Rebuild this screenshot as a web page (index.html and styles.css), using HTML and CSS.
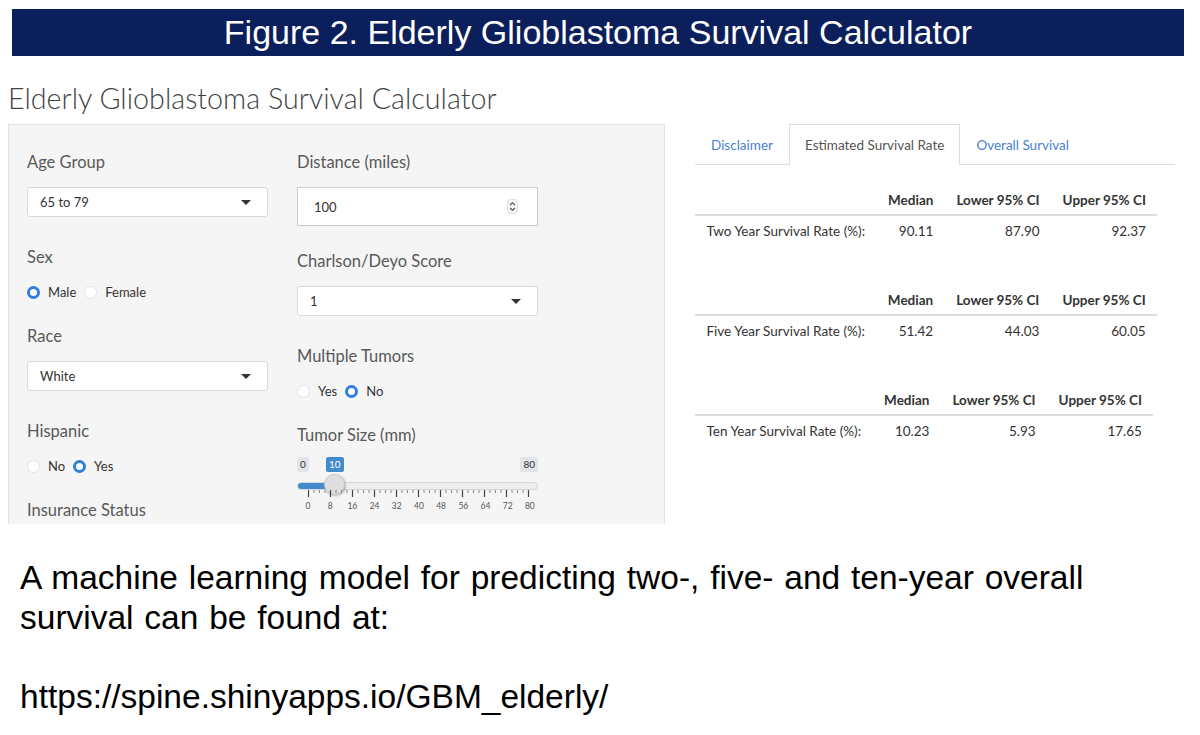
FILE: index.html
```html
<!DOCTYPE html>
<html>
<head>
<meta charset="utf-8">
<link rel="stylesheet" href="styles.css">
</head>
<body>
<div class="banner"><span class="banner-text">Figure 2. Elderly Glioblastoma Survival Calculator</span></div>

<div class="app">
  <h1 class="app-title">Elderly Glioblastoma Survival Calculator</h1>
  <div class="app-row">
    <div class="well">
      <div class="col">
        <div class="group g-select">
          <div class="lbl">Age Group</div>
          <div class="select"><span>65 to 79</span><span class="caret"></span></div>
        </div>
        <div class="group g-radio">
          <div class="lbl">Sex</div>
          <div class="radios">
            <span class="radio on"></span><span class="rtext">Male</span>
            <span class="radio"></span><span class="rtext">Female</span>
          </div>
        </div>
        <div class="group g-select">
          <div class="lbl">Race</div>
          <div class="select"><span>White</span><span class="caret"></span></div>
        </div>
        <div class="group g-radio">
          <div class="lbl">Hispanic</div>
          <div class="radios">
            <span class="radio"></span><span class="rtext">No</span>
            <span class="radio on"></span><span class="rtext">Yes</span>
          </div>
        </div>
        <div class="group">
          <div class="lbl">Insurance Status</div>
        </div>
      </div>
      <div class="col">
        <div class="group g-num">
          <div class="lbl">Distance (miles)</div>
          <div class="numinput"><span>100</span>
            <svg class="spin" width="11" height="15" viewBox="0 0 11 15"><rect x="0.5" y="0.5" width="10" height="14" rx="3" fill="#f6f6f6" stroke="#ddd"/><path d="M3.2 6 L5.5 3.7 L7.8 6 M3.2 9 L5.5 11.3 L7.8 9" fill="none" stroke="#444" stroke-width="1.1"/></svg>
          </div>
        </div>
        <div class="group g-select">
          <div class="lbl">Charlson/Deyo Score</div>
          <div class="select"><span>1</span><span class="caret"></span></div>
        </div>
        <div class="group g-radio">
          <div class="lbl">Multiple Tumors</div>
          <div class="radios">
            <span class="radio"></span><span class="rtext">Yes</span>
            <span class="radio on"></span><span class="rtext">No</span>
          </div>
        </div>
        <div class="group">
          <div class="lbl">Tumor Size (mm)</div>
          <div class="slider">
            <span class="s-min">0</span>
            <span class="s-val">10</span>
            <span class="s-max">80</span>
            <div class="s-track"><div class="s-fill"></div></div>
            <div class="s-handle"></div>
            <svg class="s-grid" width="241" height="12" viewBox="0 0 241 12">
              <g stroke="#444" stroke-width="1.2">
                <line x1="11.5" y1="0" x2="11.5" y2="7"/><line x1="33.5" y1="0" x2="33.5" y2="7"/><line x1="55.5" y1="0" x2="55.5" y2="7"/><line x1="77.5" y1="0" x2="77.5" y2="7"/><line x1="99.5" y1="0" x2="99.5" y2="7"/><line x1="121.5" y1="0" x2="121.5" y2="7"/><line x1="143.5" y1="0" x2="143.5" y2="7"/><line x1="165.5" y1="0" x2="165.5" y2="7"/><line x1="187.5" y1="0" x2="187.5" y2="7"/><line x1="209.5" y1="0" x2="209.5" y2="7"/><line x1="231.5" y1="0" x2="231.5" y2="7"/>
              </g>
              <g stroke="#888" stroke-width="1">
                <line x1="17" y1="0" x2="17" y2="3"/><line x1="22.5" y1="0" x2="22.5" y2="3"/><line x1="28" y1="0" x2="28" y2="3"/>
                <line x1="39" y1="0" x2="39" y2="3"/><line x1="44.5" y1="0" x2="44.5" y2="3"/><line x1="50" y1="0" x2="50" y2="3"/>
                <line x1="61" y1="0" x2="61" y2="3"/><line x1="66.5" y1="0" x2="66.5" y2="3"/><line x1="72" y1="0" x2="72" y2="3"/>
                <line x1="83" y1="0" x2="83" y2="3"/><line x1="88.5" y1="0" x2="88.5" y2="3"/><line x1="94" y1="0" x2="94" y2="3"/>
                <line x1="105" y1="0" x2="105" y2="3"/><line x1="110.5" y1="0" x2="110.5" y2="3"/><line x1="116" y1="0" x2="116" y2="3"/>
                <line x1="127" y1="0" x2="127" y2="3"/><line x1="132.5" y1="0" x2="132.5" y2="3"/><line x1="138" y1="0" x2="138" y2="3"/>
                <line x1="149" y1="0" x2="149" y2="3"/><line x1="154.5" y1="0" x2="154.5" y2="3"/><line x1="160" y1="0" x2="160" y2="3"/>
                <line x1="171" y1="0" x2="171" y2="3"/><line x1="176.5" y1="0" x2="176.5" y2="3"/><line x1="182" y1="0" x2="182" y2="3"/>
                <line x1="193" y1="0" x2="193" y2="3"/><line x1="198.5" y1="0" x2="198.5" y2="3"/><line x1="204" y1="0" x2="204" y2="3"/>
                <line x1="215" y1="0" x2="215" y2="3"/><line x1="220.5" y1="0" x2="220.5" y2="3"/><line x1="226" y1="0" x2="226" y2="3"/>
              </g>
            </svg>
            <div class="s-nums"><span>0</span><span>8</span><span>16</span><span>24</span><span>32</span><span>40</span><span>48</span><span>56</span><span>64</span><span>72</span><span>80</span></div>
          </div>
        </div>
      </div>
    </div>

    <div class="main">
      <div class="tabs">
        <span class="tab">Disclaimer</span>
        <span class="tab active">Estimated Survival Rate</span>
        <span class="tab">Overall Survival</span>
      </div>
      <table class="rt">
        <thead><tr><th></th><th>Median</th><th>Lower 95% CI</th><th>Upper 95% CI</th></tr></thead>
        <tbody><tr><td>Two Year Survival Rate (%):</td><td>90.11</td><td>87.90</td><td>92.37</td></tr></tbody>
      </table>
      <table class="rt">
        <thead><tr><th></th><th>Median</th><th>Lower 95% CI</th><th>Upper 95% CI</th></tr></thead>
        <tbody><tr><td>Five Year Survival Rate (%):</td><td>51.42</td><td>44.03</td><td>60.05</td></tr></tbody>
      </table>
      <table class="rt">
        <thead><tr><th></th><th>Median</th><th>Lower 95% CI</th><th>Upper 95% CI</th></tr></thead>
        <tbody><tr><td>Ten Year Survival Rate (%):</td><td>10.23</td><td>5.93</td><td>17.65</td></tr></tbody>
      </table>
    </div>
  </div>
</div>

<div class="caption">
  <p>A machine learning model for predicting two-, five- and ten-year overall survival can be found at:</p>
  <p>https://spine.shinyapps.io/GBM_elderly/</p>
</div>
</body>
</html>
```

FILE: styles.css
```css
html, body { margin: 0; padding: 0; background: #fff; }
body { font-family: Lato, "Noto Sans", sans-serif; color: #333; }

.banner {
  margin: 9px 16px 0 12px;
  height: 47px;
  background: #0b1f5c;
  display: flex;
  align-items: center;
  justify-content: center;
  overflow: hidden;
}
.banner-text {
  font-family: "Liberation Sans", Arial, sans-serif;
  font-size: 34px;
  color: #fff;
  white-space: nowrap;
}

.app { padding: 0 8px; }
.app-title {
  margin: 0;
  padding-top: 26px;
  height: 42px;
  line-height: 32px;
  font-size: 28.7px;
  font-weight: 300;
  color: #444;
}
.app-row { display: flex; gap: 30px; }

.well {
  width: 657px;
  height: 400px;
  box-sizing: border-box;
  background: #f5f5f5;
  border: 1px solid #e3e3e3;
  border-bottom: none;
  padding: 27px 18px 0;
  display: grid;
  grid-template-columns: 241px 241px;
  column-gap: 29px;
  overflow: hidden;
}
.lbl {
  font-size: 16.5px;
  line-height: 20px;
  color: #595959;
  font-weight: 400;
}
.g-select { margin-bottom: 30px; }
.g-radio { margin-bottom: 22px; }
.g-num { margin-bottom: 25px; }
.g-select .lbl, .g-num .lbl { margin-bottom: 15px; }
.g-radio .lbl { margin-bottom: 13px; }

.select {
  height: 30px;
  box-sizing: border-box;
  background: #fff;
  border: 1px solid #d9d9d9;
  border-radius: 3px;
  display: flex;
  align-items: center;
  justify-content: space-between;
  padding: 0 16px 0 12px;
  font-size: 13px;
  color: #333;
}
.caret {
  width: 0; height: 0;
  border-left: 5px solid transparent;
  border-right: 5px solid transparent;
  border-top: 5px solid #333;
}
.numinput {
  height: 39px;
  box-sizing: border-box;
  background: #fff;
  border: 1px solid #ccc;
  display: flex;
  align-items: center;
  justify-content: space-between;
  padding: 0 19px 0 16px;
  font-size: 13px;
}
.radios {
  height: 24px;
  display: flex;
  align-items: center;
  font-size: 13px;
  color: #333;
}
.radio {
  width: 11px; height: 11px;
  border-radius: 50%;
  border: 1px solid #e2e2e2;
  background: #fff;
  margin-right: 8px;
}
.radio.on {
  width: 7px; height: 7px;
  border: 3px solid #2f7de1;
}
.rtext { margin-right: 8px; }

.slider {
  position: relative;
  height: 70px;
  margin-top: 12px;
}
.s-min, .s-max, .s-val {
  position: absolute;
  top: 0;
  font-size: 10px;
  line-height: 15px;
  padding: 0 3px;
  border-radius: 2px;
  background: #e1e4e9;
  color: #333;
}
.s-min { left: 0; }
.s-max { right: 0; }
.s-val { left: 29px; background: #428bca; color: #fff; }
.s-track {
  position: absolute;
  left: 0; right: 0; top: 25px;
  height: 6px;
  background: #eee;
  border: 1px solid #d5d5d5;
  border-radius: 4px;
  overflow: hidden;
}
.s-fill { width: 38px; height: 100%; background: #428bca; }
.s-handle {
  position: absolute;
  left: 27px; top: 17px;
  width: 21px; height: 21px;
  box-sizing: border-box;
  border-radius: 50%;
  background: #dedede;
  border: 1px solid #c8c8c8;
  box-shadow: 1px 1px 2px rgba(0,0,0,0.25);
}
.s-grid { position: absolute; left: 0; top: 33px; }
.s-nums {
  position: absolute;
  left: 1px; top: 44px;
  width: 242px;
  display: flex;
  justify-content: space-between;
  font-size: 8.5px;
  color: #555;
}
.s-nums span { width: 20px; text-align: center; }

.main { width: 480px; }
.tabs {
  display: flex;
  height: 40px;
  border-bottom: 1px solid #ddd;
  font-size: 13.5px;
}
.tab {
  padding: 0 15px;
  line-height: 40px;
  color: #4b7fd1;
  border: 1px solid transparent;
  border-bottom: none;
}
.tab.active {
  color: #555;
  background: #fff;
  border-color: #ddd;
  margin-bottom: -1px;
  height: 40px;
}

.rt {
  border-collapse: collapse;
  font-size: 13.5px;
  color: #333;
  margin-top: 20px;
  margin-bottom: 39px;
}
.rt th {
  font-weight: 700;
  text-align: right;
  padding: 0 11.5px;
  height: 29px;
  border-bottom: 2px solid #ddd;
  white-space: nowrap;
}
.rt td {
  text-align: right;
  padding: 0 11.5px;
  height: 30px;
  white-space: nowrap;
}
.rt td:first-child { text-align: left; }

.caption {
  padding: 34px 0 0 20px;
  font-family: "Liberation Sans", Arial, sans-serif;
  font-size: 33.5px;
  word-spacing: 1.5px;
  line-height: 40px;
  color: #000;
  width: 1110px;
}
.caption p { margin: 0 0 39px; }
```
